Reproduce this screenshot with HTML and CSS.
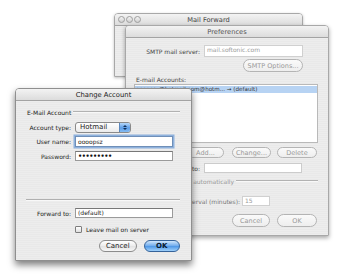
FILE: index.html
```html
<!DOCTYPE html>
<html>

<head>
  <meta charset="UTF-8">
  <title>Mail Forward</title>
  <link rel="stylesheet" href="styles.css">
</head>

<body>
  <div class="desk">

    <!-- Main window, mostly hidden behind the preferences -->
    <div class="win mail-fwd">
      <div class="titlebar">
        <span class="lights"><i></i><i></i><i></i></span>
        <span class="title">Mail Forward</span>
      </div>
    </div>

    <!-- Preferences window (inactive) -->
    <div class="win prefs">
      <div class="titlebar"><span class="title">Preferences</span></div>
      <div class="pane">
        <div class="row smtp-row">
          <span class="lbl">SMTP mail server:</span>
          <span class="field smtp-field dim">mail.softonic.com</span>
        </div>
        <div class="row opt-row">
          <span class="btn dim opt-btn">SMTP Options...</span>
        </div>
        <div class="cap">E-mail Accounts:</div>
        <div class="list">
          <div class="sel">oooopsz@hotmail.com@hotm... &rarr; (default)</div>
        </div>
        <div class="row acct-btns">
          <span class="btn dim add-btn">Add...</span>
          <span class="btn dim chg-btn">Change...</span>
          <span class="btn dim del-btn">Delete</span>
        </div>
        <div class="row fwd-row">
          <span class="lbl">Forward to:</span>
          <span class="field fwd-field"></span>
        </div>
        <div class="group auto-group">
          <span class="group-text">Check mail automatically</span>
          <span class="group-line"></span>
        </div>
        <div class="row int-row">
          <span class="lbl int-lbl">Check interval (minutes):</span>
          <span class="field int-field dim">15</span>
        </div>
        <div class="row end-btns">
          <span class="btn dim cancel-btn">Cancel</span>
          <span class="btn dim ok-btn">OK</span>
        </div>
      </div>
    </div>

    <!-- Active dialog -->
    <div class="win change">
      <div class="titlebar"><span class="title">Change Account</span></div>
      <div class="pane">
        <div class="group">
          <span class="group-text">E-Mail Account</span>
          <span class="group-line"></span>
        </div>
        <div class="row type-row">
          <span class="lbl">Account type:</span>
          <span class="popup">Hotmail<span class="arrows"><b class="up"></b><b class="down"></b></span></span>
        </div>
        <div class="row user-row">
          <span class="lbl">User name:</span>
          <span class="field wide focus">oooopsz</span>
        </div>
        <div class="row pass-row">
          <span class="lbl">Password:</span>
          <span class="field wide dots">&bull;&bull;&bull;&bull;&bull;&bull;&bull;&bull;&bull;</span>
        </div>
        <div class="sep"></div>
        <div class="row fto-row">
          <span class="lbl">Forward to:</span>
          <span class="field wide">(default)</span>
        </div>
        <div class="row check-row">
          <span class="check"></span>
          <span>Leave mail on server</span>
        </div>
        <div class="row dlg-btns">
          <span class="btn cancel">Cancel</span>
          <span class="btn default">OK</span>
        </div>
      </div>
    </div>

  </div>
</body>

</html>
```

FILE: styles.css
```css
body {
  margin: 0;
  background-color: #fff;
  font-family: "DejaVu Sans", sans-serif;
  font-size: 6px;
  color: #222;
}

.desk {
  position: relative;
  width: 340px;
  height: 279px;
  overflow: hidden;
}

/* Windows sit on a free desktop, so they are placed by coordinates */
.win {
  position: absolute;
  box-sizing: border-box;
  background: repeating-linear-gradient(#ededed 0 1px, #e9e9e9 1px 2px);
  border: 1px solid #a8a8a8;
  border-radius: 4px 4px 0 0;
}

.titlebar {
  position: relative;
  height: 11px;
  display: flex;
  align-items: center;
  justify-content: center;
  background: linear-gradient(#f3f3f3, #dcdcdc);
  border-bottom: 1px solid #a3a3a3;
  border-radius: 3px 3px 0 0;
  font-size: 6.7px;
  color: #444;
}

.mail-fwd {
  left: 114px;
  top: 13px;
  width: 189px;
  height: 64px;
  box-shadow: 0 1px 3px rgba(0, 0, 0, 0.25);
}

.lights {
  position: absolute;
  left: 3px;
  top: 2px;
  display: flex;
  gap: 1px;
}

.lights i {
  width: 5px;
  height: 5px;
  border-radius: 50%;
  border: 1px solid #9d9d9d;
  background: linear-gradient(#f4f4f4, #cfcfcf);
}

.prefs {
  left: 125px;
  top: 25px;
  width: 204px;
  height: 211px;
  box-shadow: 0 2px 4px rgba(0, 0, 0, 0.35);
}

.prefs .titlebar {
  color: #555;
}

.pane {
  display: flex;
  flex-direction: column;
}

.prefs .pane {
  padding: 0 10px 0 8px;
  color: #444;
}

.row {
  display: flex;
  align-items: center;
}

.lbl {
  flex: 0 0 auto;
  text-align: right;
  white-space: nowrap;
}

.field {
  box-sizing: border-box;
  background: #fff;
  border: 1px solid #9a9a9a;
  border-top-color: #777;
  padding-left: 2px;
  line-height: 8px;
  white-space: nowrap;
}

.dim {
  color: #9a9a9a;
}

.btn {
  box-sizing: border-box;
  display: flex;
  align-items: center;
  justify-content: center;
  border: 1px solid #8c8c8c;
  border-radius: 7px;
  background: linear-gradient(#ffffff, #ececec 50%, #e2e2e2 51%, #f6f6f6);
  font-size: 6.5px;
  color: #222;
}

.btn.dim {
  border-color: #b4b4b4;
  background: linear-gradient(#fafafa, #eeeeee);
  color: #999;
}

/* Preferences rows */
.smtp-row {
  margin-top: 7px;
  height: 12px;
}

.smtp-row .lbl,
.fwd-row .lbl {
  width: 66px;
  margin-right: 4px;
}

.smtp-field {
  width: 99px;
  height: 12px;
  border-color: #d0d0d0;
}

.opt-row {
  margin-top: 2px;
  padding-left: 109px;
}

.opt-btn {
  width: 60px;
  height: 13px;
}

.cap {
  margin-top: 4px;
  height: 8px;
  line-height: 8px;
  padding-left: 2px;
}

.list {
  box-sizing: border-box;
  height: 59px;
  background: #fff;
  border: 1px solid #b9b9b9;
  padding-top: 1px;
}

.sel {
  height: 7px;
  line-height: 7px;
  background: #b7d3f3;
  padding-left: 1px;
  font-size: 5.6px;
  color: #333;
  white-space: nowrap;
  overflow: hidden;
}

.acct-btns {
  margin-top: 4px;
  height: 11px;
  padding-left: 53px;
  gap: 8px;
}

.acct-btns .btn {
  height: 11px;
}

.add-btn {
  width: 37px;
}

.chg-btn {
  width: 39px;
}

.del-btn {
  width: 40px;
  margin-left: -2px;
}

.fwd-row {
  margin-top: 5px;
  height: 10px;
}

.fwd-field {
  width: 98px;
  height: 10px;
  border-color: #cccccc;
}

.group {
  display: flex;
  align-items: center;
  height: 8px;
}

.group-text {
  white-space: nowrap;
  padding-right: 2px;
}

.group-line {
  flex: 1;
  height: 1px;
  background: #b2b2b2;
  border-bottom: 1px solid #f8f8f8;
}

.auto-group {
  margin-top: 4px;
  color: #999;
  padding-left: 24px;
}

.int-row {
  margin-top: 11px;
  height: 10px;
  color: #777;
}

.int-lbl {
  width: 106px;
  margin-right: 2px;
}

.int-field {
  width: 28px;
  height: 10px;
  border-color: #d0d0d0;
}

.end-btns {
  margin-top: 8px;
  height: 13px;
  padding-left: 98px;
  gap: 7px;
}

.end-btns .btn {
  height: 13px;
}

.cancel-btn {
  width: 38px;
}

.ok-btn {
  width: 40px;
}

/* Change Account dialog */
.change {
  left: 15px;
  top: 88px;
  width: 177px;
  height: 173px;
  border-color: #8f8f8f;
  box-shadow: 0 4px 7px rgba(0, 0, 0, 0.5);
}

.change .titlebar {
  color: #1a1a1a;
  font-size: 6.8px;
}

.change .pane {
  padding: 0 11px 0 10px;
}

.change .group {
  margin-top: 7px;
  padding-left: 1px;
}

.change .lbl {
  width: 45px;
  margin-right: 4px;
}

.type-row {
  margin-top: 6px;
  height: 10px;
}

.popup {
  box-sizing: border-box;
  position: relative;
  width: 56px;
  height: 11px;
  border: 1px solid #8a8a8a;
  border-radius: 3px;
  background: linear-gradient(#ffffff, #ebebeb);
  padding-left: 4px;
  line-height: 9px;
  font-size: 7px;
}

.arrows {
  position: absolute;
  right: 0;
  top: 0;
  bottom: 0;
  width: 10px;
  border-radius: 0 2px 2px 0;
  background: linear-gradient(#b6d8fa, #5c9ce6 55%, #86bdf3);
  border-left: 1px solid #5c88bd;
  display: flex;
  flex-direction: column;
  align-items: center;
  justify-content: center;
  gap: 1px;
}

.arrows b {
  width: 0;
  height: 0;
  border-left: 2px solid transparent;
  border-right: 2px solid transparent;
}

.arrows .up {
  border-bottom: 2px solid #10305a;
}

.arrows .down {
  border-top: 2px solid #10305a;
}

.user-row {
  margin-top: 4px;
  height: 11px;
}

.wide {
  width: 98px;
  height: 11px;
  line-height: 9px;
}

.focus {
  border-color: #6f8fb8;
  box-shadow: 0 0 0 1.5px #8fb2dd;
}

.pass-row {
  margin-top: 4px;
  height: 10px;
}

.pass-row .wide {
  height: 10px;
  line-height: 8px;
}

.dots {
  font-size: 6.5px;
  font-weight: bold;
  letter-spacing: -0.4px;
  color: #111;
}

.sep {
  margin-top: 38px;
  height: 1px;
  background: #b0b0b0;
  border-bottom: 1px solid #f8f8f8;
}

.fto-row {
  margin-top: 7px;
  height: 10px;
}

.fto-row .wide {
  height: 10px;
  line-height: 8px;
}

.check-row {
  margin-top: 6px;
  height: 10px;
  padding-left: 49px;
  gap: 4px;
}

.check {
  box-sizing: border-box;
  width: 7px;
  height: 7px;
  border: 1px solid #7d7d7d;
  border-radius: 1px;
  background: linear-gradient(#ffffff, #dedede);
}

.dlg-btns {
  margin-top: 6px;
  height: 12px;
  padding-left: 73px;
  gap: 7px;
}

.dlg-btns .btn {
  height: 12px;
  font-size: 7px;
}

.cancel {
  width: 38px;
}

.default {
  width: 37px;
  border-color: #35639a;
  background: linear-gradient(#cfe6fc, #6eaaec 50%, #4b95e6 51%, #9fd0fa);
  font-weight: bold;
  color: #0a1a30;
}
```
